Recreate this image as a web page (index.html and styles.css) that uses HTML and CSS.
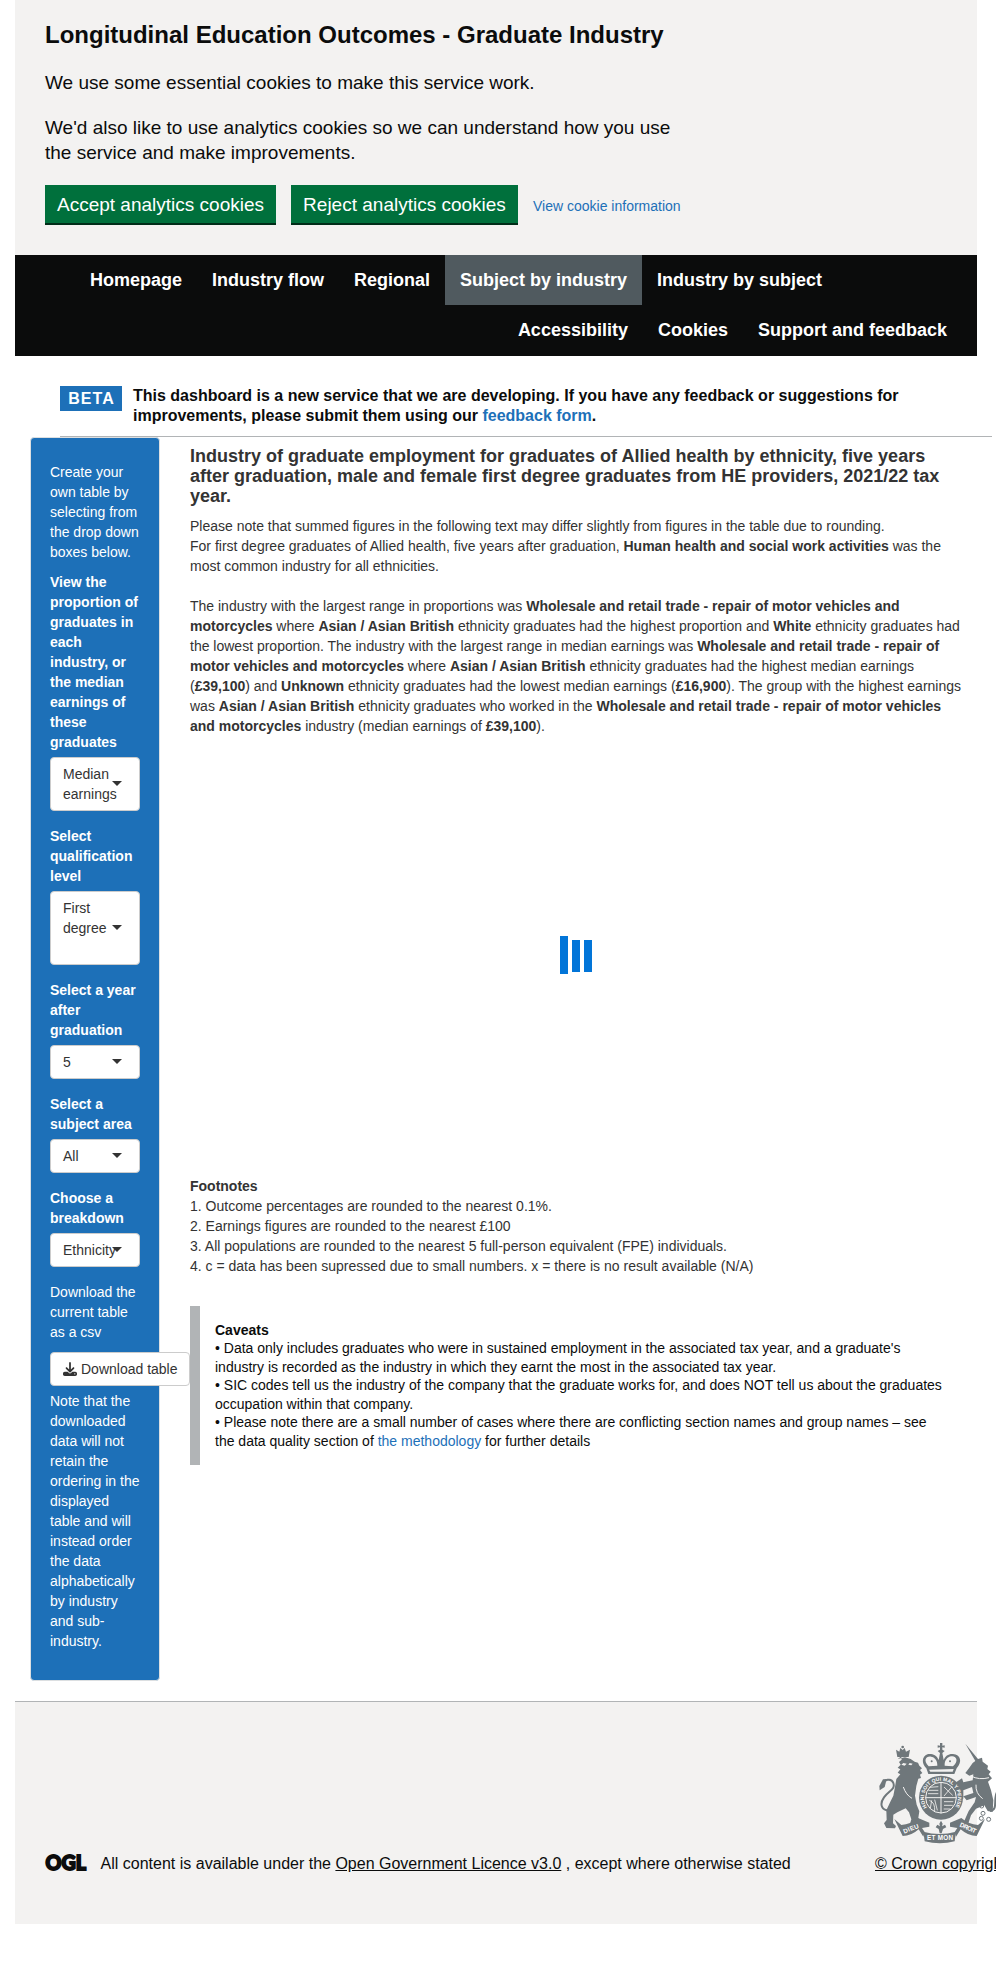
FILE: index.html
```html
<!DOCTYPE html>
<html lang="en">
<head>
<meta charset="utf-8">
<title>Longitudinal Education Outcomes - Graduate Industry</title>
<link rel="stylesheet" href="styles.css">
</head>
<body>
<div class="page">
  <section class="cookie-banner">
    <h2 class="banner-title">Longitudinal Education Outcomes - Graduate Industry</h2>
    <p class="banner-text">We use some essential cookies to make this service work.</p>
    <p class="banner-text">We'd also like to use analytics cookies so we can understand how you use the service and make improvements.</p>
    <div class="banner-actions">
      <button class="govuk-button accept">Accept analytics cookies</button>
      <button class="govuk-button reject">Reject analytics cookies</button>
      <a class="link" href="#">View cookie information</a>
    </div>
  </section>

  <nav class="navbar">
    <div class="nav-row">
      <a href="#">Homepage</a><a href="#">Industry flow</a><a href="#">Regional</a><a class="active" href="#">Subject by industry</a><a href="#">Industry by subject</a>
    </div>
    <div class="nav-row nav-right">
      <a href="#">Accessibility</a><a href="#">Cookies</a><a href="#">Support and feedback</a>
    </div>
  </nav>

  <div class="phase-banner">
    <strong class="tag">BETA</strong>
    <p class="phase-text">This dashboard is a new service that we are developing. If you have any feedback or suggestions for improvements, please submit them using our <a class="link" href="#">feedback form</a>.</p>
  </div>

  <div class="content">
    <aside class="sidebar">
      <p>Create your own table by selecting from the drop down boxes below.</p>
      <div class="field">
        <label>View the proportion of graduates in each industry, or the median earnings of these graduates</label>
        <button class="picker">Median earnings<span class="caret"></span></button>
      </div>
      <div class="field">
        <label>Select qualification level</label>
        <button class="picker tall">First degree<span class="caret"></span></button>
      </div>
      <div class="field">
        <label>Select a year after graduation</label>
        <button class="picker">5<span class="caret"></span></button>
      </div>
      <div class="field">
        <label>Select a subject area</label>
        <button class="picker">All<span class="caret"></span></button>
      </div>
      <div class="field">
        <label>Choose a breakdown</label>
        <button class="picker">Ethnicity<span class="caret"></span></button>
      </div>
      <p>Download the current table as a csv</p>
      <button class="download">
        <svg class="download-icon" viewBox="0 0 512 512"><path d="M288 32c0-17.700-14.300-32-32-32s-32 14.300-32 32v242.700l-73.400-73.400c-12.500-12.500-32.800-12.500-45.300 0s-12.500 32.800 0 45.300l128 128c12.500 12.500 32.800 12.500 45.300 0l128-128c12.500-12.500 12.500-32.800 0-45.300s-32.800-12.500-45.300 0L288 274.700V32zM64 352c-35.300 0-64 28.700-64 64v32c0 35.300 28.700 64 64 64h384c35.300 0 64-28.700 64-64v-32c0-35.300-28.700-64-64-64H346.500l-45.300 45.300c-25 25-65.500 25-90.500 0L165.500 352H64zm368 56a24 24 0 1 1 0 48 24 24 0 1 1 0-48z"/></svg>
        Download table
      </button>
      <p class="note">Note that the downloaded data will not retain the ordering in the displayed table and will instead order the data alphabetically by industry and sub-industry.</p>
    </aside>

    <main class="main">
      <h4 class="main-title">Industry of graduate employment for graduates of Allied health by ethnicity, five years after graduation, male and female first degree graduates from HE providers, 2021/22 tax year.</h4>
      <div class="summary">Please note that summed figures in the following text may differ slightly from figures in the table due to rounding.</div>
      <div class="summary">For first degree graduates of Allied health, five years after graduation, <b>Human health and social work activities</b> was the most common industry for all ethnicities.<br><br>The industry with the largest range in proportions was <b>Wholesale and retail trade - repair of motor vehicles and motorcycles</b> where <b>Asian / Asian British</b> ethnicity graduates had the highest proportion and <b>White</b> ethnicity graduates had the lowest proportion. The industry with the largest range in median earnings was <b>Wholesale and retail trade - repair of motor vehicles and motorcycles</b> where <b>Asian / Asian British</b> ethnicity graduates had the highest median earnings (<b>£39,100</b>) and <b>Unknown</b> ethnicity graduates had the lowest median earnings (<b>£16,900</b>). The group with the highest earnings was <b>Asian / Asian British</b> ethnicity graduates who worked in the <b>Wholesale and retail trade - repair of motor vehicles and motorcycles</b> industry (median earnings of <b>£39,100</b>).</div>
      <div class="loading"><span class="bar first"></span><span class="bar"></span><span class="bar"></span></div>
      <div class="footnotes"><b>Footnotes</b><br>1. Outcome percentages are rounded to the nearest 0.1%.<br>2. Earnings figures are rounded to the nearest £100<br>3. All populations are rounded to the nearest 5 full-person equivalent (FPE) individuals.<br>4. c = data has been supressed due to small numbers. x = there is no result available (N/A)</div>
      <div class="inset"><b>Caveats</b><br>• Data only includes graduates who were in sustained employment in the associated tax year, and a graduate's industry is recorded as the industry in which they earnt the most in the associated tax year.<br>• SIC codes tell us the industry of the company that the graduate works for, and does NOT tell us about the graduates occupation within that company.<br>• Please note there are a small number of cases where there are conflicting section names and group names – see the data quality section of <a class="link" href="#">the methodology</a> for further details</div>
    </main>
  </div>

  <footer class="footer">
    <svg class="ogl" viewBox="0 0 41 17"><text x="0.500" y="15.800" textLength="40.500" lengthAdjust="spacingAndGlyphs">OGL</text></svg>
    <span class="licence">All content is available under the <a href="#">Open Government Licence v3.0</a> , except where otherwise stated</span>
    <div class="crown">
      <svg class="crest" viewBox="0 0 384 330">
        <defs>
          <path id="garter" d="M153 211A51 51 0 1 1 237 211"/>
        </defs>
        <g class="ink">
          <!-- lion -->
          <path d="M65 66l22-5 17 5 12 8 10 3 4 9 8 8-6 5 7 9-7 5 3 10-8 2-6 22-4 29 5 27 8 20-3 19 3 13 11 8-2 7-28 1-9-10 4-14-7-21-10-12-25 12-12 7-1 26 9 8-3 7-26-1-7-14 8-10-1-29 12-26 9-18 5-26 4-24 12-14-8-5 8-10-8-5 9-9-5-8 8-7-1-10z"/>
          <path d="M64 60l-4-22 10 6 3-11 7 6 6-6 4 11 12-6-4 22z"/>
          <circle cx="80" cy="30" r="4"/>
          <path class="line" d="M44 220C15 222 10 201 24 181s35-23 28-43c-6-17-30-10-30 5"/>
          <path d="M21 127l11-1-6 24-15 10-1-13z"/>
          <!-- crown -->
          <path d="M151 94c-20-22-8-46 14-43 12 1 19 9 23 18l4-21-7-6 7-4v-7l-7 1v-7l7 1v-8h7v8l7-1v7l-7-1v7l7 4-7 6 4 21c5-12 14-19 28-18 23 2 29 23 11 43l-7 17H157z"/>
          <!-- shield -->
          <circle cx="195" cy="182" r="66"/>
          <!-- unicorn -->
          <path d="M268 20l38 46 12-4 2 12 16 12-2 10 10 8-6 8 10 12-12 10 9 26 7 30-2 35-15-3-10-17-25 10-15 20-9 27-18 6 12-28 8-18 18-26 4-16-28 10-10-12 30-10-4-18-26 10v25l-14-10 2-25-10-14 18-12 4 12 28-6 2-18-12 4-12-8 12-16 10-14 8-6z"/>
          <path class="line" d="M342 222c30-4 2-46 30-66 16-14 0-32-8-22"/>
          <!-- ribbon -->
          <path d="M55 246l21 18q28-2 50-21l34 14v12l-22 4 8 12-4 14-14-22q-22 20-48 20z"/>
          <path d="M327 246l-21 18q-28-2-50-21l-34 14v12l22 4-8 12 4 14 14-22q22 20 48 20z"/>
          <path d="M142 284q48 14 98 0l-4 29q-44 12-90 0z"/>
        </g>
        <g class="paper">
          <path d="M158 88c-17-17-9-31 7-29 11 1 20 12 19 27zM231 88c18-15 11-32-5-30-12 1-21 13-20 28z"/>
          <path d="M159 98l74-2-3 8h-67z"/>
          <path d="M82 78l10 2-6 6-10-3zM101 78l9 2-4 5-9-2z"/>
        </g>
        <g class="cut">
          <circle cx="195" cy="182" r="46"/>
          <path d="M195 135v94M148 182h94"/>
          <path d="M285 117q24 13 54 5M82 150q8 24 26 34M300 143q-2 26 20 42"/>
        </g>
        <g class="ink">
          <path d="M190 260l5-9 5 9-2 8 9-5 4 8-10 5-4 13h-6l-3-13-9-5 5-8 8 5z"/>
          <circle cx="167" cy="73" r="3"/><circle cx="222" cy="73" r="3"/>
        </g>
        <g class="detail">
          <path d="M161 151l26-2M157 160h30M156 170h31M204 150l26 25M228 149l-24 28M160 190q18 6 16 33M167 190l-4 24M176 188l8 32M204 194h28M204 205h26M203 216h20"/>
        </g>
        <g class="line thin">
          <circle cx="317" cy="207" r="6"/><circle cx="321" cy="229" r="6"/><circle cx="316" cy="244" r="6"/><circle cx="338" cy="247" r="6"/>
        </g>
        <g class="motto">
          <text class="garter"><textPath href="#garter" textLength="220">HONI SOIT QUI MAL Y PENSE</textPath></text>
          <text x="0" y="0" textLength="48" transform="translate(85 290) rotate(-22)">DIEU</text>
          <text x="0" y="0" textLength="52" transform="translate(250 268) rotate(24)">DROIT</text>
          <text x="153" y="310" textLength="78">ET MON</text>
        </g>
      </svg>
      <a href="#">© Crown copyright</a>
    </div>
  </footer>
</div>
</body>
</html>
```
FILE: styles.css
```css
* { box-sizing: border-box; }
body {
  margin: 0;
  overflow: hidden;
  background: #fff;
  color: #333;
  font: 14px/20px "Liberation Sans", Arial, sans-serif;
}
button { font: inherit; margin: 0; }
p { margin: 0 0 10px; }
.page { width: 962px; margin-left: 15px; }
.link { color: #1d70b8; text-decoration: none; }

.cookie-banner {
  height: 255px;
  padding: 20px 30px 0;
  background: #f3f2f1;
  color: #0b0c0c;
}
.banner-title { margin: 0 0 20px; font-size: 24px; line-height: 30px; }
.banner-text { width: 640px; margin-bottom: 20px; font-size: 19px; line-height: 25px; }
.banner-actions { display: flex; align-items: flex-start; gap: 15px; }
.banner-actions .link { padding-top: 11px; }
.govuk-button {
  height: 38px;
  padding: 0;
  border: 0;
  background: #00703c;
  box-shadow: 0 2px 0 #002d18;
  color: #fff;
  font-size: 19px;
  line-height: 19px;
}
.accept { width: 231px; }
.reject { width: 227px; }

.navbar { height: 101px; padding: 0 15px 0 60px; background: #0b0c0c; }
.nav-row { display: flex; }
.nav-right { justify-content: flex-end; }
.navbar a {
  height: 50px;
  padding: 15px;
  color: #fff;
  font-size: 18px;
  font-weight: bold;
  text-decoration: none;
  white-space: nowrap;
}
.navbar .active { background: #505a5f; }

.phase-banner {
  display: flex;
  align-items: flex-start;
  width: 932px;
  height: 81px;
  margin-left: 45px;
  padding-top: 30px;
  border-bottom: 1px solid #b1b4b6;
}
.tag {
  width: 62px;
  height: 25px;
  margin-right: 11px;
  padding-left: 1px;
  background: #1d70b8;
  color: #fff;
  font-size: 16px;
  line-height: 25px;
  letter-spacing: 1px;
  text-align: center;
}
.phase-text {
  width: 800px;
  color: #0b0c0c;
  font-size: 16px;
  font-weight: bold;
}

.content { display: flex; align-items: flex-start; padding-left: 15px; }
.sidebar {
  flex: none;
  width: 130px;
  height: 1244px;
  padding: 24px 19px 0;
  border: 1px solid #dcdfe1;
  border-radius: 4px;
  background: #1d70b8;
  color: #fff;
}
.sidebar > p { margin-bottom: 10px; }
.field { margin-bottom: 15px; }
.field label { display: block; margin-bottom: 5px; font-weight: bold; }
.picker {
  position: relative;
  display: block;
  width: 90px;
  padding: 6px 25px 6px 12px;
  border: 1px solid #ccc;
  border-radius: 4px;
  background: #fff;
  color: #333;
  text-align: left;
}
.picker.tall { padding-bottom: 26px; }
.caret {
  position: absolute;
  top: 50%;
  right: 17px;
  margin-top: -3px;
  border: 5px solid transparent;
  border-top-color: #333;
  border-bottom: 0;
}
.download {
  display: flex;
  align-items: center;
  gap: 4px;
  width: 140px;
  height: 34px;
  padding: 0 12px;
  border: 1px solid #ccc;
  border-radius: 4px;
  background: #fff;
  color: #333;
  white-space: nowrap;
}
.download-icon { flex: none; width: 14px; height: 14px; fill: #333; }
.sidebar .note { margin-top: 5px; }

.main { flex: none; width: 808px; padding: 9px 0 0 30px; }
.main-title { margin: 0 0 10px; font-size: 18px; line-height: 20px; }
.loading {
  display: flex;
  gap: 4px;
  height: 440px;
  padding: 204px 0 0 370px;
}
.bar { width: 8px; height: 32px; background: #0275d8; }
.bar.first { height: 38px; margin-top: -4px; }
.inset {
  margin-top: 30px;
  padding: 15px 24px 15px 15px;
  border-left: 10px solid #b1b4b6;
  color: #0b0c0c;
  line-height: 18.42px;
}

.footer {
  display: flex;
  align-items: flex-start;
  height: 223px;
  margin-top: 20px;
  padding-left: 30px;
  border-top: 1px solid #b1b4b6;
  background: #f3f2f1;
  color: #0b0c0c;
  font-size: 16px;
}
.footer a { color: #0b0c0c; text-decoration: underline; }
.ogl { flex: none; width: 41px; height: 17px; margin: 152px 14.600px 0 0; overflow: visible; }
.ogl text { font: 900 20.500px Lato, sans-serif; fill: #0b0c0c; stroke: #0b0c0c; stroke-width: 1.800px; }
.licence { flex: none; width: 774.400px; padding-top: 152px; }
.crown { flex: none; display: flex; flex-direction: column; width: 140px; padding-top: 35px; }
.crown a { margin-top: 7px; white-space: nowrap; }
.crest { width: 128px; height: 110px; margin-left: 1px; }
.ink { fill: #6f777b; }
.paper { fill: #f3f2f1; }
.cut { fill: none; stroke: #f3f2f1; stroke-width: 3; }
.detail { fill: none; stroke: #f3f2f1; stroke-width: 2.5; }
.line { fill: none; stroke: #6f777b; stroke-width: 6; }
.thin { stroke-width: 3; }
.motto { fill: #fff; font: bold 19px "Liberation Sans", sans-serif; }
.motto .garter { font-size: 15px; }
```
